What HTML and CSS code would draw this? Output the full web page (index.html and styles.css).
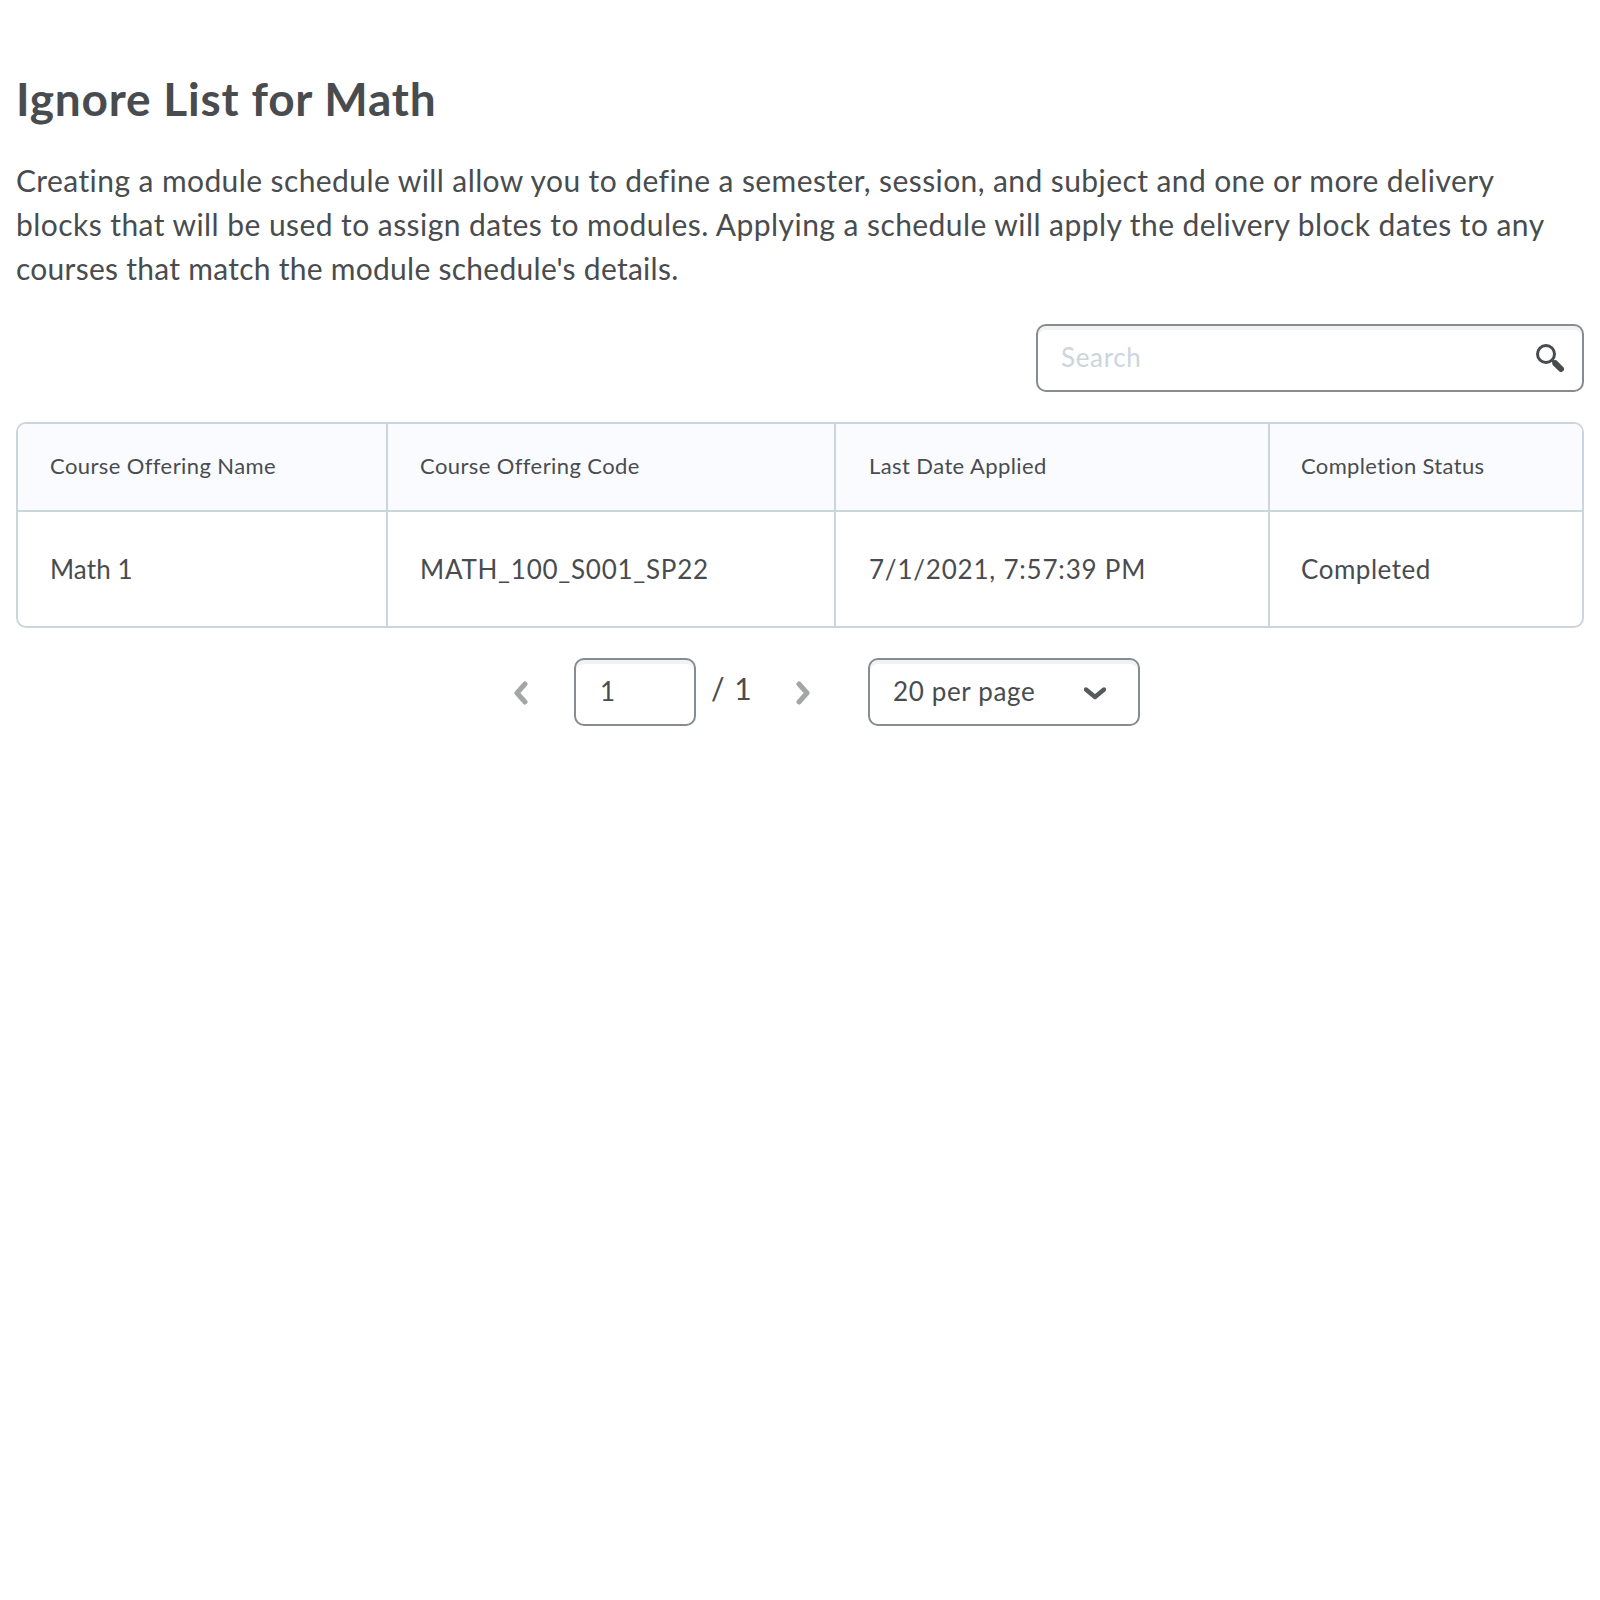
FILE: index.html
```html
<!DOCTYPE html>
<html lang="en">
<head>
<meta charset="utf-8">
<title>Ignore List for Math</title>
<link rel="stylesheet" href="styles.css">
</head>
<body>
<main class="page">
  <h1 class="title">Ignore List for Math</h1>
  <p class="description">Creating a module schedule will allow you to define a semester, session, and subject and one or more delivery <span class="loose">blocks that will be used to assign dates to modules. Applying a schedule will apply the delivery block dates to any</span> <span class="tight">courses that match the module schedule's details.</span></p>
  <div class="field search">
    <span class="placeholder">Search</span>
    <svg class="search-icon" width="28" height="28" viewBox="0 0 28 28"><circle cx="10" cy="10" r="8.5" fill="none" stroke="#494c4e" stroke-width="3"/><path d="M15.5 15.5L19 19" stroke="#494c4e" stroke-width="3"/><path d="M19.3 19.3L25 25" stroke="#494c4e" stroke-width="6" stroke-linecap="round"/></svg>
  </div>
  <table class="grid">
    <colgroup><col class="col-name"><col class="col-code"><col class="col-date"><col class="col-status"></colgroup>
    <thead><tr><th>Course Offering Name</th><th>Course Offering Code</th><th class="date">Last Date Applied</th><th class="status">Completion Status</th></tr></thead>
    <tbody><tr><td class="name">Math 1</td><td class="code">MATH_100_S001_SP22</td><td class="date">7/1/2021, 7:57:39 PM</td><td class="status">Completed</td></tr></tbody>
  </table>
  <nav class="pager">
    <svg class="prev" width="14" height="24" viewBox="0 0 14 24"><path d="M11 3L3 12L11 21"/></svg>
    <span class="field page-number">1</span>
    <span class="total">/ 1</span>
    <svg class="next" width="14" height="24" viewBox="0 0 14 24"><path d="M3 3L11 12L3 21"/></svg>
    <span class="field page-size">20 per page<svg class="chevron" width="22" height="13" viewBox="0 0 22 13"><path d="M2 2.5L11 10L20 2.5"/></svg></span>
  </nav>
</main>
</body>
</html>
```
FILE: styles.css
```css
* { box-sizing: border-box; }
body {
  margin: 0;
  background: #fff;
  color: #494c4e;
  font-family: Lato, sans-serif;
  font-size: 30px;
  line-height: 44px;
  letter-spacing: 0.41px;
}
.page { padding: 71px 16px 0; }
.title {
  margin: 0 0 31px;
  font-size: 46px;
  line-height: 56px;
  font-weight: 700;
  letter-spacing: 0.8px;
}
.description { margin: 0; }
.loose { letter-spacing: 0.44px; }
.tight { letter-spacing: 0.27px; }
.field {
  display: flex;
  align-items: center;
  height: 68px;
  border: 2px solid #868c8f;
  border-radius: 10px;
  box-shadow: inset 0 4px 0 #f1f2f4;
  padding: 0 23px 2px;
  font-size: 26px;
  line-height: 36px;
  letter-spacing: 0.65px;
}
.search {
  width: 548px;
  margin: 34px 0 30px auto;
  justify-content: space-between;
  padding-right: 18px;
}
.placeholder { color: #cdd5dc; }
.search-icon { margin-top: 2px; }
.grid {
  width: 100%;
  table-layout: fixed;
  border-collapse: separate;
  border-spacing: 0;
  border: 2px solid #cdd5dc;
  border-radius: 10px;
  overflow: hidden;
}
.col-name { width: 370px; }
.col-code { width: 448px; }
.col-date { width: 434px; }
.grid th, .grid td { padding: 0 0 0 32px; text-align: left; }
.grid th:not(:last-child), .grid td:not(:last-child) { border-right: 2px solid #cdd5dc; }
.grid th {
  height: 88px;
  padding-bottom: 2px;
  background: #f9fbff;
  border-bottom: 2px solid #cdd5dc;
  font-size: 22px;
  line-height: 32px;
  font-weight: 400;
  letter-spacing: 0.41px;
}
.grid td {
  height: 114px;
  font-size: 26px;
  line-height: 36px;
  letter-spacing: 0.52px;
}
.grid .date { padding-left: 33px; }
.grid .status { padding-left: 31px; }
.grid th.status { letter-spacing: 0.35px; }
.grid td.name { letter-spacing: 0.1px; }
.grid td.code { letter-spacing: 0.75px; }
.grid td.date { letter-spacing: 0.79px; }
.pager {
  display: flex;
  align-items: center;
  margin-top: 30px;
  padding-left: 498px;
}
.pager path {
  fill: none;
  stroke: #a4a5a6;
  stroke-width: 5;
  stroke-linecap: round;
  stroke-linejoin: round;
}
.pager .prev { margin-top: 2px; }
.page-number { width: 122px; margin-left: 46px; padding-left: 24px; }
.total { width: 69px; margin: 0 0 8px 15px; letter-spacing: 1px; }
.pager .next { margin: 2px 0 0 16px; }
.page-size { width: 272px; margin-left: 58px; justify-content: space-between; padding-right: 32px; }
.pager .chevron { margin-top: 5px; }
.pager .chevron path { stroke: #565a5c; stroke-width: 4.4; }
```
